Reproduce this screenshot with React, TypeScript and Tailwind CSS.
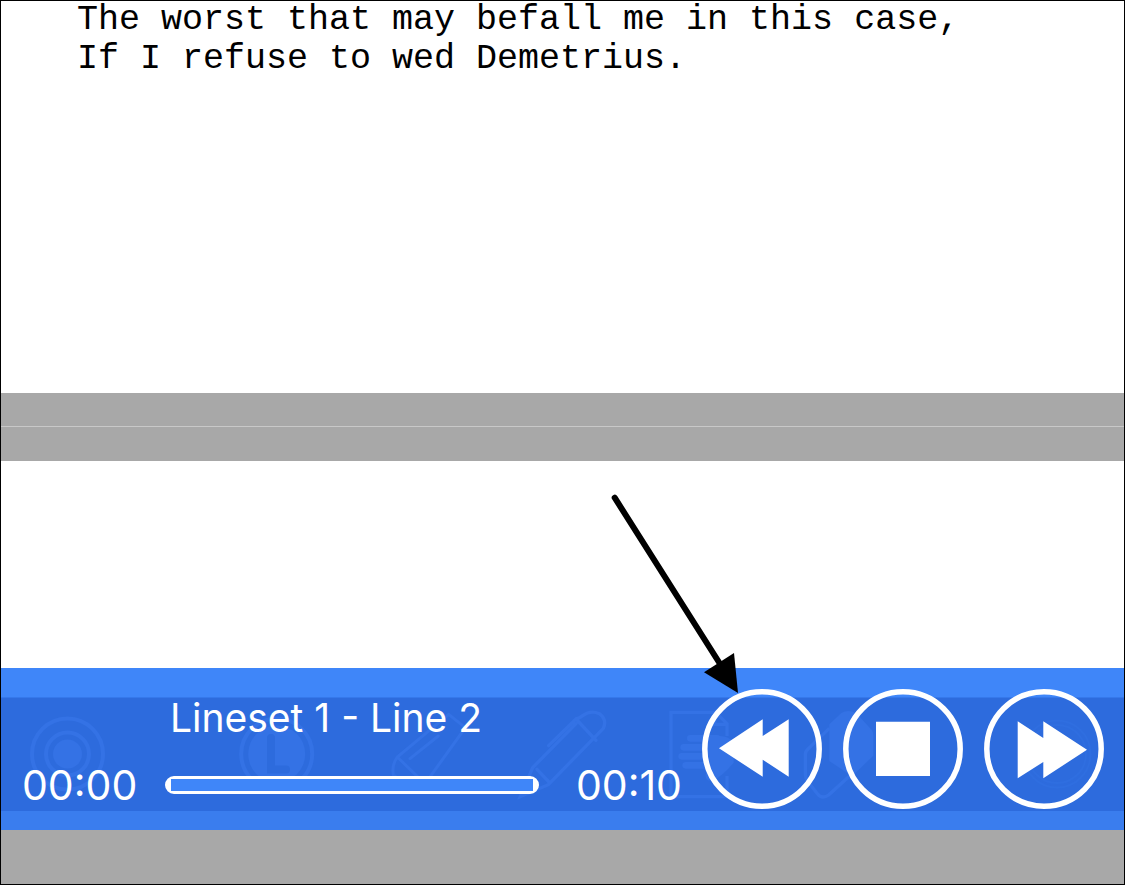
import type { ReactNode } from "react";

const lines = [
  "The worst that may befall me in this case,",
  "If I refuse to wed Demetrius.",
];

function RoundButton({ label, children }: { label: string; children: ReactNode }) {
  return (
    <button type="button" aria-label={label} className="block size-[120px] shrink-0 rounded-full">
      <svg viewBox="0 0 120 120" className="size-full" aria-hidden="true">
        <circle cx="60" cy="60" r="57.2" fill="none" stroke="#fff" strokeWidth="5.5" />
        {children}
      </svg>
    </button>
  );
}

function ToolbarBackdrop() {
  return (
    <div aria-hidden="true" className="absolute inset-0 flex flex-col overflow-hidden">
      <div className="h-[29px] shrink-0 bg-[#3f86f9]" />
      <div className="h-px shrink-0 bg-[#3578eb]" />
      <div className="flex flex-1 items-center bg-[#2d6bdd] pl-[29px] text-[#3472e5]">
        <svg viewBox="0 0 76 90" className="h-[90px] w-[76px] shrink-0" fill="none" stroke="currentColor" strokeWidth="4">
          <circle cx="37.5" cy="44" r="35.5" />
          <circle cx="37.5" cy="44" r="21.5" />
          <circle cx="37.5" cy="44" r="14.5" fill="currentColor" stroke="none" />
        </svg>
        <svg viewBox="0 0 76 90" className="ml-[133px] h-[90px] w-[76px] shrink-0" fill="none">
          <circle cx="37.7" cy="44" r="35.5" stroke="currentColor" strokeWidth="4" />
          <circle cx="37.7" cy="44" r="28.5" fill="currentColor" />
          <path d="M32 28v31.5h15" stroke="#2d6bdd" strokeWidth="8" strokeLinecap="round" />
        </svg>
        <svg viewBox="150 147 240 270" className="ml-[75px] h-[90px] w-[80px] shrink-0" fill="none" stroke="currentColor" strokeWidth="9" strokeLinecap="round">
          <path d="M326 160 172 288q-20 28-10 62M172 288l72 70M210 293l85-68M326 160l50 40L264 356" />
          <path d="m154 350 14-10 8 18h-22z" fill="currentColor" stroke="none" />
        </svg>
        <svg viewBox="530 147 270 270" className="ml-[47px] size-[90px] shrink-0" fill="none" stroke="currentColor" strokeWidth="10" strokeLinecap="round">
          <path d="M625 254l82-80 60 64M707 174q10-2 20-10 24-18 50-6 24 18 12 44L624 371l-84 36 37-87 130-132M590 325l36 38" />
        </svg>
        <svg viewBox="25 207 210 270" className="ml-[61px] h-[90px] w-[70px] shrink-0" fill="none" stroke="currentColor" strokeWidth="10">
          <path d="M202 285v-37l-34-34H34v253h168v-62M165 214v36h38" />
          <path d="M92 292h80M72 319h80M66 346h86M78 373h80" strokeWidth="20" strokeLinecap="round" />
          <path d="M130 285h50q28 0 42 20v60q-35 42-64 54-22 2-20-18l5-20z" fill="currentColor" stroke="none" />
        </svg>
        <svg viewBox="425 207 219 270" className="ml-[64px] h-[90px] w-[73px] shrink-0" fill="none" stroke="currentColor" strokeWidth="10" strokeLinejoin="round">
          <path d="M507 262l-62 60q-10 8-10 18v60q0 12 8 22l28 36q14 18 34 4l70-64" />
          <path d="M507 250l36-34q25-14 48 4l44 48q4 6 4 14v62l-64 62-68-46z" fill="currentColor" stroke="none" />
        </svg>
        <svg viewBox="0 0 70 90" className="ml-[147px] h-[90px] w-[70px] shrink-0 text-[#2f6ee0]" fill="none" stroke="currentColor" strokeWidth="2">
          <circle cx="35" cy="44" r="33.5" />
          <circle cx="35" cy="44" r="29" />
        </svg>
      </div>
      <div className="h-[19px] shrink-0 bg-[#3a7dee]" />
    </div>
  );
}

function Arrow() {
  return (
    <svg
      viewBox="608 491 140 202"
      aria-hidden="true"
      className="pointer-events-none absolute -left-[94px] -top-[198px] h-[202px] w-[140px]"
    >
      <path d="M614.7 497.7 722 667" stroke="#000" strokeWidth="6" strokeLinecap="round" />
      <path d="M738 693 704 672.300 734 653z" />
    </svg>
  );
}

function Player() {
  return (
    <section aria-label="Playback" className="relative shrink-0 text-white">
      <ToolbarBackdrop />
      <div className="relative flex items-start gap-5 pb-[8px] pl-[21px] pr-5 pt-[21px]">
        <div className="grid min-w-0 flex-1 grid-cols-[114px_1fr_114px] grid-rows-[58px_75px] items-center gap-x-[29px] font-['Inter',sans-serif]">
          <h2 id="track" className="col-start-2 row-start-1 whitespace-nowrap pl-[5px] text-[39px] leading-[44px]">
            Lineset 1 - Line 2
          </h2>
          <time className="col-start-1 row-start-2 text-[41px] leading-[50px]">00:00</time>
          <progress
            aria-labelledby="track"
            value={0}
            max={10}
            className="col-start-2 row-start-2 block h-[18px] w-full appearance-none rounded-[9px] border-x-[6px] border-y-[3px] border-white bg-[#3f86f9] [&::-webkit-progress-bar]:bg-[#3f86f9]"
          />
          <time className="col-start-3 row-start-2 text-right text-[41px] leading-[50px]">00:10</time>
        </div>
        <div className="flex shrink-0 gap-[21px]">
          <div className="relative">
            <RoundButton label="Rewind">
              <path d="M17 59.300 60.700 30.300V47L86.700 30.300v57.400L60.700 70.700v17z" fill="#fff" />
            </RoundButton>
            <Arrow />
          </div>
          <RoundButton label="Stop">
            <path d="M33 32.700h54V87H33z" fill="#fff" />
          </RoundButton>
          <RoundButton label="Fast forward">
            <path d="M103 60.700 59.300 32.300V49L33.700 32.300v57L59.300 73v16.300z" fill="#fff" />
          </RoundButton>
        </div>
      </div>
    </section>
  );
}

export default function App() {
  return (
    <main className="flex min-h-screen flex-col border border-black bg-white text-black">
      <section className="flex-[392_1_0px] pl-[76px] font-['Liberation_Mono',monospace] text-[35px] leading-[39px]">
        {lines.map((line) => (
          <p key={line}>{line}</p>
        ))}
      </section>
      <div className="h-[34px] shrink-0 border-b border-[#c8c8c8] bg-[#a8a8a8]" />
      <div className="h-[34px] shrink-0 bg-[#a8a8a8]" />
      <div className="flex-[207_1_0px]" />
      <Player />
      <div className="h-[54px] shrink-0 bg-[#a8a8a8]" />
    </main>
  );
}
